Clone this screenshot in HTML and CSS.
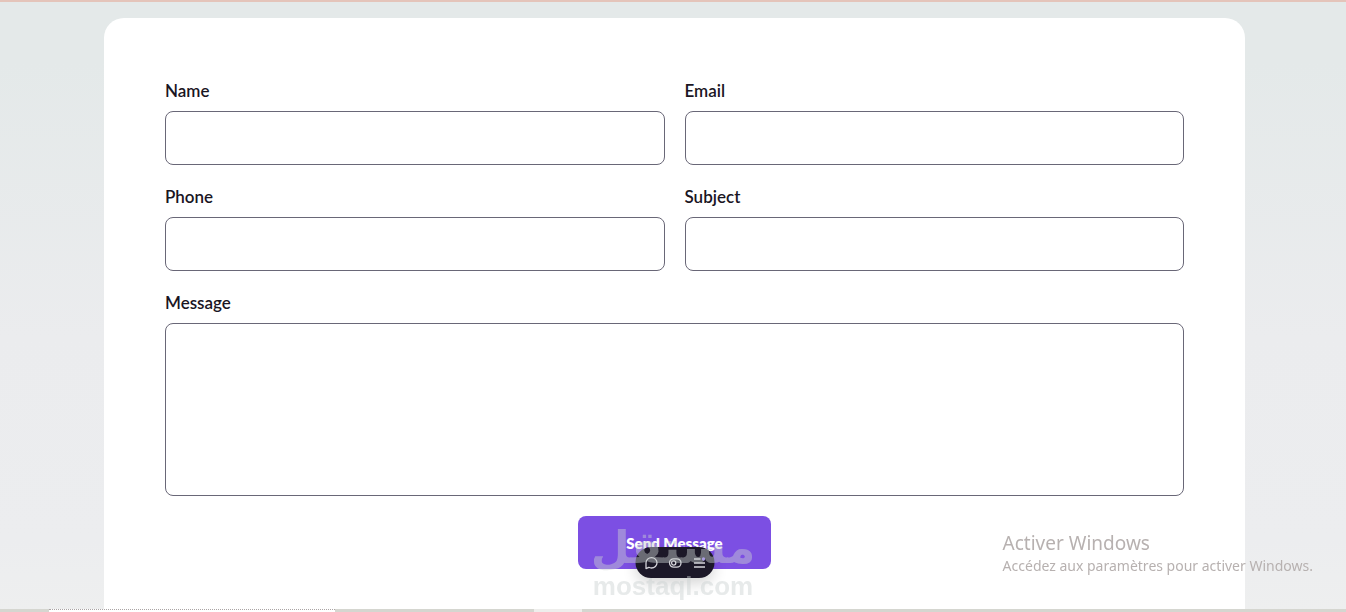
FILE: index.html
```html
<!DOCTYPE html>
<html lang="en">
<head>
<meta charset="utf-8">
<meta name="viewport" content="width=device-width, initial-scale=1">
<title>Contact</title>
<link rel="stylesheet" href="styles.css">
</head>
<body>
<main class="page">
  <form class="card">
    <div class="field">
      <label class="label" for="name">Name</label>
      <input class="control" id="name" type="text">
    </div>
    <div class="field">
      <label class="label" for="email">Email</label>
      <input class="control" id="email" type="email">
    </div>
    <div class="field">
      <label class="label" for="phone">Phone</label>
      <input class="control" id="phone" type="tel">
    </div>
    <div class="field">
      <label class="label" for="subject">Subject</label>
      <input class="control" id="subject" type="text">
    </div>
    <div class="field wide">
      <label class="label" for="message">Message</label>
      <textarea class="control area" id="message"></textarea>
    </div>
    <button class="send" type="button">Send Message</button>
  </form>
</main>

<div class="toolbar">
  <button class="tool" type="button" aria-label="Comment">
    <svg width="14" height="14" viewBox="0 0 14 14" fill="none" stroke="#d5d3da" stroke-width="1.3"><path d="M1.500 12.600V6.800A5.500 5.200 0 1 1 7 12Q5.400 12 4.300 11.300Z" stroke-linejoin="round"/></svg>
  </button>
  <button class="tool" type="button" aria-label="Preview">
    <svg width="14" height="14" viewBox="0 0 14 14" fill="none" stroke="#d5d3da" stroke-width="1.3"><rect x="1" y="2.800" width="11.500" height="8.400" rx="4.200"/><circle cx="5.200" cy="7" r="2.100"/></svg>
  </button>
  <button class="tool" type="button" aria-label="Menu">
    <svg width="14" height="14" viewBox="0 0 14 14" fill="none" stroke="#d5d3da" stroke-width="1.300"><path d="M1.500 3H8M1.500 7H12.500M1.500 11H12.500"/><circle cx="11" cy="3" r="1.700" fill="#8f72ec" stroke="none"/></svg>
  </button>
</div>

<div class="watermark">
  <span class="mark-ar" lang="ar" dir="rtl">مستقل</span>
  <span class="mark-en">mostaql.com</span>
</div>

<div class="activation">
  <p class="activation-title">Activer Windows</p>
  <p class="activation-text">Accédez aux paramètres pour activer Windows.</p>
</div>

<div class="taskbar">
  <div class="task-search"></div>
  <div class="task-active"></div>
</div>
</body>
</html>
```
FILE: styles.css
```css
* { box-sizing: border-box; }

body {
  margin: 0;
  height: 100vh;
  overflow: hidden;
  font-family: Lato, "Open Sans", sans-serif;
  color: #1a1523;
}

.page {
  min-height: 100vh;
  display: flex;
  padding: 16px 101px 0 104px;
  border-top: 2px solid #e4c4ba;
  background: linear-gradient(#e4e9e9 0, #e4e9e9 60px, #ebecee 55%, #ecedef 88%, #eeefef);
}

.card {
  flex: 1;
  display: grid;
  grid-template-columns: 1fr 1fr;
  align-content: start;
  gap: 20px;
  padding: 61px 61px 0;
  border-radius: 20px 20px 0 0;
  background: #fff;
}

.field {
  display: flex;
  flex-direction: column;
  gap: 8px;
}

.wide { grid-column: 1 / -1; }

.label {
  font-size: 17px;
  font-weight: 600;
  line-height: 24px;
}

.control {
  width: 100%;
  height: 54px;
  padding: 12px 16px;
  border: 1px solid #696777;
  border-radius: 8px;
  background: #fff;
  font: inherit;
  outline: none;
}

.area {
  height: 173px;
  resize: none;
}

.send {
  grid-column: 1 / -1;
  justify-self: center;
  height: 53px;
  padding: 0 48px;
  border: 0;
  border-radius: 8px;
  background: #7c4fe3;
  color: #fff;
  font: 800 15px Lato, sans-serif;
}

.toolbar {
  position: fixed;
  left: calc(50% + 2px);
  bottom: 34px;
  transform: translateX(-50%);
  display: flex;
  align-items: center;
  justify-content: center;
  gap: 10px;
  width: 79px;
  height: 31px;
  border-radius: 16px;
  background: #1c1828;
  box-shadow: 0 6px 14px rgba(0, 0, 0, .16);
}

.tool {
  display: flex;
  padding: 0;
  border: 0;
  background: none;
}

.watermark {
  position: fixed;
  left: 50%;
  bottom: 12px;
  transform: translateX(-50%);
  display: flex;
  flex-direction: column;
  align-items: center;
  color: #cbd1d1;
  opacity: .45;
  pointer-events: none;
}

.mark-ar {
  font: bold 45px/48px "DejaVu Sans", sans-serif;
}

.mark-en {
  font: bold 26px/28px "Liberation Sans", sans-serif;
}

.activation {
  position: fixed;
  right: 33px;
  bottom: 35px;
  color: #b7b1b0;
  font-family: "Noto Sans", "Open Sans", sans-serif;
  pointer-events: none;
}

.activation p { margin: 0; }

.activation-title {
  font-size: 19px;
  line-height: 24px;
}

.activation-text {
  font-size: 14px;
  line-height: 22px;
}

.taskbar {
  position: fixed;
  inset: auto 0 0;
  display: flex;
  height: 3px;
  padding-left: 49px;
  background: #d5d6d0;
}

.task-search {
  width: 286px;
  border-top: 1px dotted #aaa4a4;
  background: #fff;
}

.task-active {
  width: 48px;
  margin-left: 199px;
  background: #eeeeec;
}
```
